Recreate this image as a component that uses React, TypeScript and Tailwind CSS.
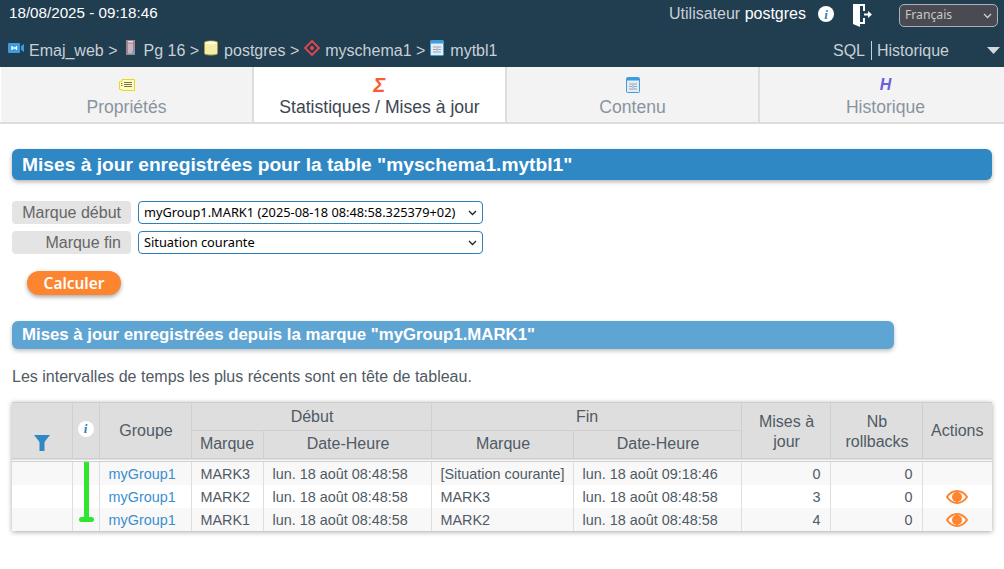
const sans = 'font-["Liberation_Sans",Arial,sans-serif]';
const ui = 'font-["Noto_Sans",sans-serif]';

function CameraIcon() {
  return (
    <svg width="16" height="12" viewBox="0 0 16 12">
      <rect x="0" y="1" width="12" height="10" rx="1" fill="#3d9be0" />
      <path d="M4 4v4M8.5 4v4M4 6h4.500" stroke="#fff" strokeWidth="1.300" />
      <path d="M13 4l3-2v8l-3-2z" fill="#3d9be0" />
    </svg>
  );
}

function ServerIcon() {
  return (
    <svg width="11" height="16" viewBox="0 0 11 16">
      <rect x="1" y="0" width="9" height="15" fill="#9c8492" />
      <rect x="3" y="1" width="5" height="1.500" fill="#e0d8dc" />
      <rect x="3" y="3.500" width="5" height="10" fill="#c9b4c0" />
      <rect x="7" y="11" width="2.500" height="2.500" fill="#39c0c8" />
    </svg>
  );
}

function DatabaseIcon() {
  return (
    <svg width="14" height="16" viewBox="0 0 14 16">
      <path d="M0.500 2.500C0.500 0.500 13.500 0.500 13.500 2.500V13.500C13.500 15.500 0.500 15.500 0.500 13.500Z" fill="#f3eda8" stroke="#a89a45" />
      <ellipse cx="7" cy="2.800" rx="5.500" ry="1.600" fill="#fdfbe0" />
    </svg>
  );
}

function SchemaIcon() {
  return (
    <svg width="16" height="16" viewBox="0 0 16 16">
      <path d="M8 1l7 7-7 7-7-7z" fill="none" stroke="#e2474c" strokeWidth="1.800" />
      <circle cx="8" cy="8" r="2" fill="#e2474c" />
    </svg>
  );
}

function TableIcon() {
  return (
    <svg width="14" height="16" viewBox="0 0 14 16">
      <rect x="0.500" y="0.500" width="13" height="15" rx="1" fill="#e6edf2" stroke="#3d9be0" />
      <rect x="1" y="1" width="12" height="2.500" fill="#3d9be0" />
      <path d="M3 7h3M8 7h3M3 9.500h3M8 9.500h3M3 12h3M8 12h3M7 6v7" stroke="#8a9aa5" strokeWidth="0.900" />
    </svg>
  );
}

function PropsIcon() {
  return (
    <svg width="16" height="13" viewBox="0 0 16 13">
      <path d="M0.500 3.500H3V1.500H15.500V12.500H3V11.500H0.500Z" fill="#fdf9c8" stroke="#e8d820" />
      <path d="M5 4.500h8M5 6.500h8M5 8.500h8M2 5.500h1.500M2 7.500h1.500" stroke="#7d7830" strokeWidth="1" />
    </svg>
  );
}

function EyeIcon() {
  return (
    <svg width="22" height="14" viewBox="0 0 22 14">
      <path d="M1 7C4 2.500 7.500 1 11 1s7 1.500 10 6c-3 4.500-6.500 6-10 6S4 11.500 1 7Z" fill="none" stroke="#fd8530" strokeWidth="2" />
      <circle cx="11" cy="7" r="5" fill="#fd8530" />
    </svg>
  );
}

function DoorIcon() {
  return (
    <svg width="20" height="24" viewBox="0 0 20 24">
      <path d="M1 1h12v7h-2V3H8v16h3v-4h2v6H8v3L1 21Z" fill="#fff" />
      <path d="M12 10.500h4V8l4 3.500-4 3.500v-2.500h-4z" fill="#fff" />
    </svg>
  );
}

function FunnelIcon() {
  return (
    <svg width="16" height="16" viewBox="0 0 16 16">
      <path d="M0 0h16l-5.500 7v9h-5V7z" fill="#2f87c4" />
    </svg>
  );
}

function InfoDot() {
  return (
    <div className="mx-auto flex h-[16px] w-[16px] items-center justify-center rounded-full bg-white font-['Liberation_Serif',serif] text-[13px] font-bold italic leading-none text-[#2f7fb8]">i</div>
  );
}

function Crumb({ icon, label, gap, last, className = '' }: { icon: React.ReactNode; label: string; gap: string; last?: boolean; className?: string }) {
  return (
    <span className={`flex items-center ${gap} ${className}`}>
      <span className="-mt-[5px] flex">{icon}</span>
      <span>{label}{last ? '' : ' >'}</span>
    </span>
  );
}

function Tab({ icon, label, active }: { icon: React.ReactNode; label: string; active?: boolean }) {
  return (
    <div className={`flex w-[253px] shrink-0 flex-col items-center border-r-2 border-[#dddddd] pt-[9px] ${active ? 'bg-white text-[#3c4650]' : 'bg-[#f3f3f3] text-[#8a949e]'}`}>
      <div className="flex h-[17px] items-center">{icon}</div>
      <div className="mt-[2px] text-[17.600px] leading-[24px]">{label}</div>
    </div>
  );
}

const thBase = 'border border-[#cfcfcf] bg-[#dedede] text-center font-normal text-[16px] leading-[20px] text-[#505a64]';
const th = `${thBase} pl-[10px] pr-[8px]`;
const td = 'border-x border-[#dedede] px-[9px] pb-0 pt-[1px] text-[14.400px] leading-[22px] whitespace-nowrap';
const tdText = `${td} text-[#505a64]`;

const rows = [
  { mark: 'MARK3', start: 'lun. 18 août 08:48:58', endMark: '[Situation courante]', end: 'lun. 18 août 09:18:46', upd: 0, eye: false },
  { mark: 'MARK2', start: 'lun. 18 août 08:48:58', endMark: 'MARK3', end: 'lun. 18 août 08:48:58', upd: 3, eye: true },
  { mark: 'MARK1', start: 'lun. 18 août 08:48:58', endMark: 'MARK2', end: 'lun. 18 août 08:48:58', upd: 4, eye: true },
];

export default function App() {
  return (
    <div className={`h-[569px] w-[1004px] overflow-hidden bg-white ${sans}`}>
      {/* Top bar */}
      <div className="h-[67px] bg-[#213d50] pl-[9px] pr-[6px]">
        <div className="flex h-[34px] items-start">
          <div className="pt-[4px] text-[15.200px] leading-[18px] text-white">18/08/2025 - 09:18:46</div>
          <div className="ml-auto flex items-start">
            <div className="pt-[4px] text-[16px] leading-[20px] text-[#c8d0d6]">
              Utilisateur <span className="text-white">postgres</span>
            </div>
            <div className="ml-[12px] mt-[6px]"><InfoDot /></div>
            <div className="ml-[18px] mt-[3px]"><DoorIcon /></div>
            <div className={`ml-[27px] mt-[4px] flex h-[23px] w-[99px] items-center justify-between rounded-[5px] border border-[#aab2b8] bg-[#4a4a52] pl-[5px] pr-[5px] text-[12.200px] text-[#c8c8c8] ${ui}`}>
              Français
              <svg width="9" height="6" viewBox="0 0 9 6"><path d="M1 1l3.500 3.500L8 1" fill="none" stroke="#d0d0d0" strokeWidth="1.300" /></svg>
            </div>
          </div>
        </div>
        <div className="flex h-[33px] items-center text-[16px] text-[#c8d0d6]">
          <div className="-ml-[1px] flex items-center gap-[5px]">
            <Crumb icon={<CameraIcon />} label="Emaj_web" gap="gap-[5px]" className="mr-[2px]" />
            <Crumb icon={<ServerIcon />} label="Pg 16" gap="gap-[8px]" />
            <Crumb icon={<DatabaseIcon />} label="postgres" gap="gap-[6px]" />
            <Crumb icon={<SchemaIcon />} label="myschema1" gap="gap-[5px]" />
            <Crumb icon={<TableIcon />} label="mytbl1" gap="gap-[6px]" last />
          </div>
          <div className="-mr-[2px] ml-auto flex items-center">
            <span className="pr-[6px]">SQL</span>
            <span className="border-l border-[#c8d0d6] pl-[5px] leading-[19px]">Historique</span>
            <svg className="-mt-[1px] ml-[38px]" width="13" height="7" viewBox="0 0 13 7"><path d="M0 0h13L6.500 7z" fill="#d5d9dc" /></svg>
          </div>
        </div>
      </div>

      {/* Tabs */}
      <div className="flex h-[57px] border-b-[2px] border-[#dddddd] pl-[1px]">
        <Tab icon={<PropsIcon />} label="Propriétés" />
        <Tab active icon={<span className="text-[20px] font-bold italic leading-none text-[#fa5a30]">Σ</span>} label="Statistiques / Mises à jour" />
        <Tab icon={<TableIcon />} label="Contenu" />
        <Tab icon={<span className="text-[16px] font-bold italic leading-none text-[#6a5fe0]">H</span>} label="Historique" />
      </div>

      <div className="px-[12px]">
        <div className="mt-[25px] h-[31px] rounded-[6px] bg-[#2f87c4] pl-[10px] text-[19.200px] font-bold leading-[31px] text-white shadow-[0_2px_4px_rgba(0,0,0,0.3)]">
          Mises à jour enregistrées pour la table "myschema1.mytbl1"
        </div>

        {/* Mark selectors */}
        <div className="mt-[21px] flex flex-col gap-[7px]">
          {[
            ['Marque début', 'myGroup1.MARK1 (2025-08-18 08:48:58.325379+02)'],
            ['Marque fin', 'Situation courante'],
          ].map(([label, value]) => (
            <div key={label} className="flex items-center">
              <div className="h-[23px] w-[119px] rounded-[4px] bg-[#e4e4e4] pr-[10px] text-right text-[16px] leading-[23px] text-[#666666]">{label}</div>
              <div className={`ml-[7px] flex h-[23px] w-[345px] items-center justify-between rounded-[4px] border border-[#2f7fb8] bg-white pl-[5px] pr-[5px] text-[12.800px] text-black ${ui}`}>
                {value}
                <svg width="9" height="6" viewBox="0 0 9 6"><path d="M1 1l3.500 3.500L8 1" fill="none" stroke="#222" strokeWidth="1.300" /></svg>
              </div>
            </div>
          ))}
        </div>

        <div className={`ml-[15px] mt-[17px] flex h-[24px] w-[94px] items-center justify-center rounded-full bg-[#fd8530] pt-[1px] text-[15.400px] font-semibold text-white shadow-[0_2px_4px_rgba(0,0,0,0.35)] ${ui}`}>Calculer</div>

        <div className="mt-[26px] h-[28px] w-[882px] rounded-[6px] bg-[#5fa5d4] pl-[10px] text-[16.800px] font-bold leading-[28px] text-white shadow-[0_2px_4px_rgba(0,0,0,0.25)]">
          Mises à jour enregistrées depuis la marque "myGroup1.MARK1"
        </div>

        <p className="mt-[19px] text-[16px] leading-[18px] text-[#505a64]">Les intervalles de temps les plus récents sont en tête de tableau.</p>

        <table className="mt-[16px] w-[980px] table-fixed border-collapse shadow-[0_1px_5px_rgba(0,0,0,0.35)]">
          <colgroup>
            <col className="w-[60px]" /><col className="w-[27px]" /><col className="w-[92px]" /><col className="w-[72px]" /><col className="w-[168px]" />
            <col className="w-[142px]" /><col className="w-[168px]" /><col className="w-[89px]" /><col className="w-[92px]" /><col className="w-[70px]" />
          </colgroup>
          <thead className="border-b-[4px] border-double border-[#cfcfcf]">
            <tr className="h-[28px]">
              <th rowSpan={2} className={`${thBase} border-l-0 pb-[7px] align-bottom`}>
                <div className="flex justify-center"><FunnelIcon /></div>
              </th>
              <th rowSpan={2} className={`${thBase} pb-[21px] align-bottom`}>
                <InfoDot />
              </th>
              <th rowSpan={2} className={`${th} pt-[1px]`}>Groupe</th>
              <th colSpan={2} className={th}>Début</th>
              <th colSpan={2} className={th}>Fin</th>
              <th rowSpan={2} className={`${th} pt-[3px]`}>Mises à jour</th>
              <th rowSpan={2} className={`${th} pt-[3px]`}>Nb rollbacks</th>
              <th rowSpan={2} className={`${thBase} border-r-0 pt-[1px]`}>Actions</th>
            </tr>
            <tr className="h-[29px]">
              <th className={thBase}>Marque</th>
              <th className={th}>Date-Heure</th>
              <th className={th}>Marque</th>
              <th className={th}>Date-Heure</th>
            </tr>
          </thead>
          <tbody>
            {rows.map((r, i) => (
              <tr key={r.mark} className={`h-[23px] ${i % 2 === 0 ? 'bg-[#f8f8f8]' : 'bg-white'}`}>
                <td className={`${td} border-l-0`}></td>
                <td className={`${td} relative`}>
                  <div className={`absolute left-[11px] top-0 w-[5px] bg-[#2ee62e] ${i === 2 ? 'h-[11px]' : 'bottom-0'}`} />
                  {i === 2 && <div className="absolute left-[6px] top-[9px] h-[5px] w-[15px] rounded-full bg-[#2ee62e]" />}
                </td>
                <td className={`${td} text-[#3a8fcf]`}>myGroup1</td>
                <td className={tdText}>{r.mark}</td>
                <td className={tdText}>{r.start}</td>
                <td className={tdText}>{r.endMark}</td>
                <td className={tdText}>{r.end}</td>
                <td className={`${tdText} text-right`}>{r.upd}</td>
                <td className={`${tdText} text-right`}>0</td>
                <td className={`${td} border-r-0 text-center`}>
                  {r.eye && <span className="flex justify-center"><EyeIcon /></span>}
                </td>
              </tr>
            ))}
          </tbody>
        </table>
      </div>
    </div>
  );
}
